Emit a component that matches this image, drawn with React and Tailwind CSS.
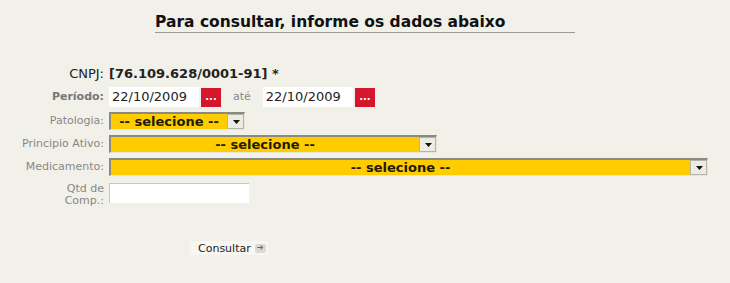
const FONT = { fontFamily: "Verdana, 'DejaVu Sans', sans-serif" };

function Label({ children, bold = false }) {
  return (
    <div className={`w-[104px] shrink-0 text-right text-[11px] leading-[12px] ${bold ? "font-bold text-[#777]" : "text-[#888]"}`}>
      {children}
    </div>
  );
}

function Select({ width }) {
  return (
    <div
      className="flex h-[18px] items-stretch bg-[#ffcc00] border-t-2 border-l-2 border-t-[#8a8a80] border-l-[#8a8a80] border-b border-r border-b-[#e8e6d8] border-r-[#e8e6d8]"
      style={{ width }}
    >
      <span className="flex-1 text-center text-[13px] font-bold leading-[15px] text-[#221a00]">-- selecione --</span>
      <span className="flex w-[17px] items-center justify-center bg-[#ecebe6] border-l-2 border-[#f1f0e9] outline outline-1 outline-[#b5b3a8] -outline-offset-1">
        <svg width="7" height="4" viewBox="0 0 7 4">
          <path d="M0 0h7L3.5 4z" fill="#111" />
        </svg>
      </span>
    </div>
  );
}

function DateField() {
  return (
    <div className="flex items-center gap-[2px]">
      <div className="h-[20px] w-[90px] bg-white pl-[3px] text-[13px] leading-[20px] text-[#222]">22/10/2009</div>
      <button className="flex h-[19px] w-[20px] items-center justify-center bg-[#d4172a] text-[10px] font-bold leading-none text-white">
        ...
      </button>
    </div>
  );
}

export default function App() {
  return (
    <div className="h-[283px] w-[730px] overflow-hidden bg-[#f1f0e9]" style={FONT}>
      <div className="ml-[155px] mt-[12px] w-[420px] border-b border-[#9a9a94] text-[15.5px] font-bold leading-[20px] text-[#111]">
        Para consultar, informe os dados abaixo
      </div>

      <div className="mt-[33px] flex items-center gap-[5px]">
        <div className="w-[104px] text-right text-[13px] leading-[16px] text-[#222]">CNPJ:</div>
        <div className="text-[13px] font-bold leading-[16px] text-[#222]">[76.109.628/0001-91] *</div>
      </div>

      <div className="mt-[5px] flex items-center gap-[5px]">
        <Label bold>Período:</Label>
        <DateField />
        <span className="mx-[7px] text-[11px] text-[#888]">até</span>
        <DateField />
      </div>

      <div className="mt-[5px] flex items-center gap-[5px]">
        <Label>Patologia:</Label>
        <Select width={136} />
      </div>

      <div className="mt-[5px] flex items-center gap-[5px]">
        <Label>Principio Ativo:</Label>
        <Select width={328} />
      </div>

      <div className="mt-[5px] flex items-center gap-[5px]">
        <Label>Medicamento:</Label>
        <Select width={599} />
      </div>

      <div className="mt-[7px] flex items-start gap-[5px]">
        <Label>
          Qtd de
          <br />
          Comp.:
        </Label>
        <div className="h-[20px] w-[140px] bg-white border-t border-l border-[#c8c7c0]" />
      </div>

      <div className="ml-[190px] mt-[34px] flex h-[14px] w-[78px] items-center gap-[4px] bg-[#f7f6f1] pl-[8px]">
        <span className="text-[11px] leading-[13px] text-[#222]">Consultar</span>
        <span className="flex h-[9px] w-[11px] items-center justify-center rounded-[2px] bg-[#dcdbd3] text-[8px] leading-none text-[#666]">
          ➔
        </span>
      </div>
    </div>
  );
}
